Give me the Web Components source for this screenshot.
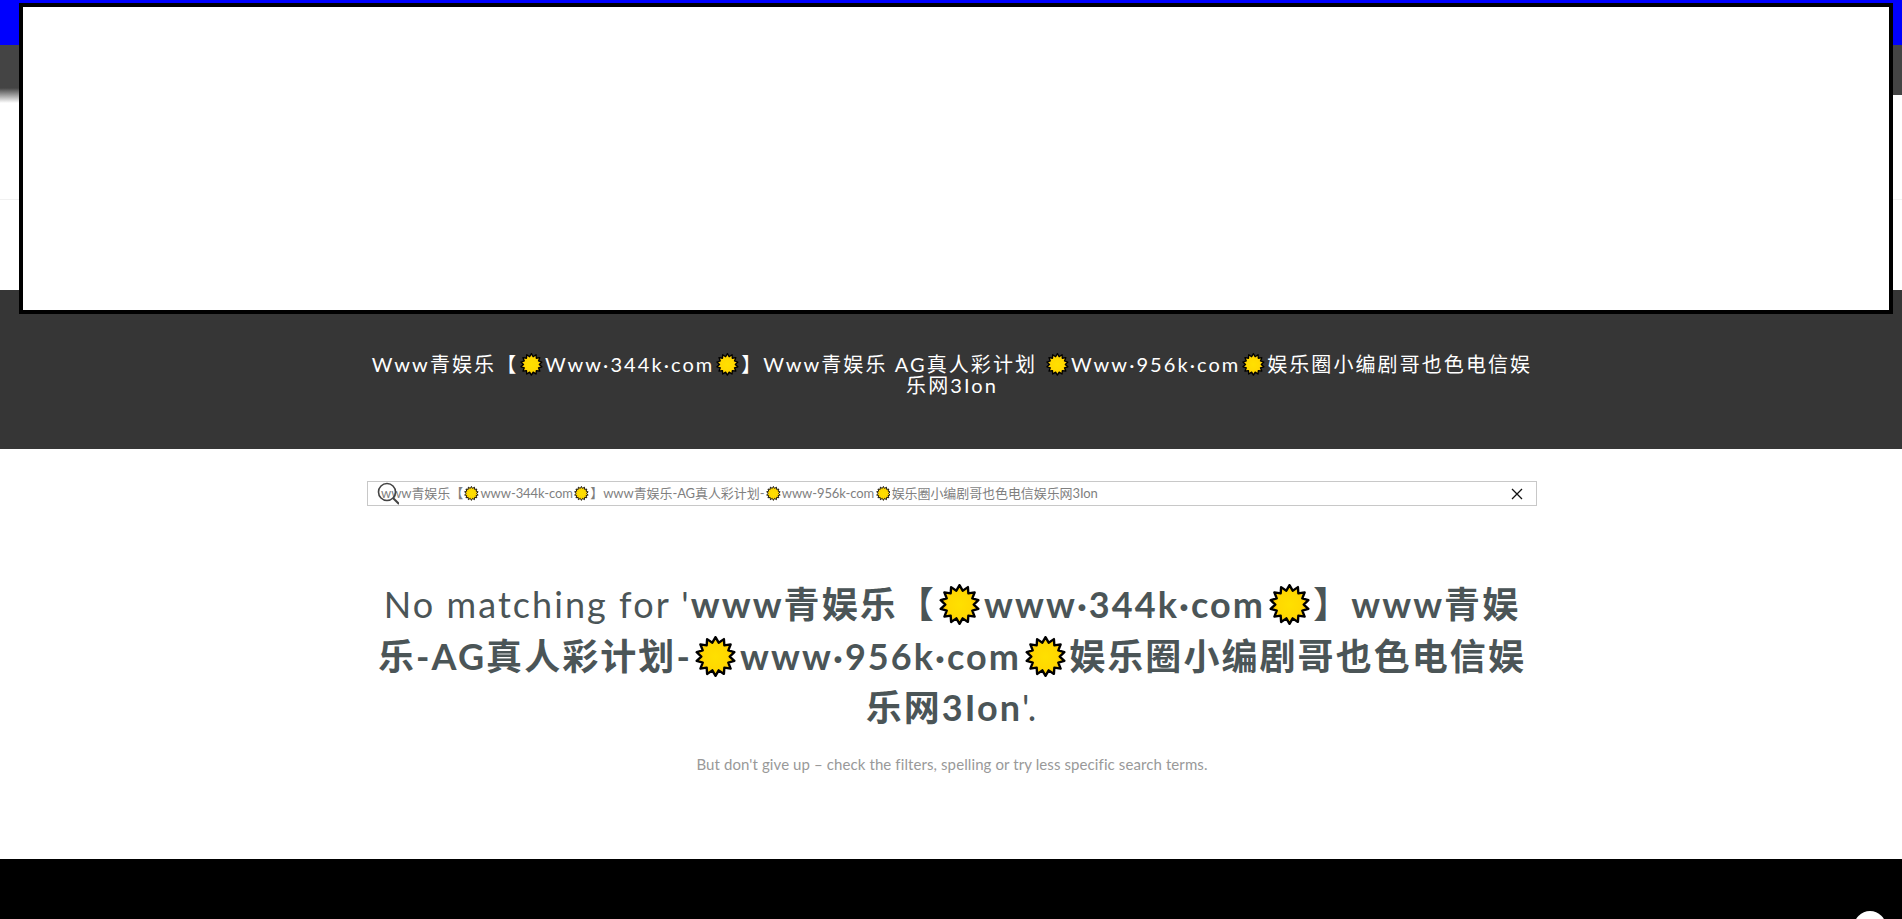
<!DOCTYPE html>
<html><head><meta charset="utf-8"><style>
html,body{margin:0;height:919px;overflow:hidden;background:#fff}
body{font-family:Lato,"Noto Sans CJK SC",sans-serif}
</style></head><body>
<app-page></app-page>
<script>
const FONT='Lato,"Noto Sans CJK SC",sans-serif';
class SunIcon extends HTMLElement{
  constructor(){super();const r=this.attachShadow({mode:'open'});
    const n=14,R=49,I=36;let p=[];
    for(let i=0;i<n*2;i++){const a=Math.PI*i/n-Math.PI/2,q=i%2?I:R;p.push((52+q*Math.cos(a)).toFixed(1)+','+(52+q*Math.sin(a)).toFixed(1));}
    r.innerHTML=`<style>:host{display:inline-block;width:1.14em;height:1.14em;vertical-align:0;margin:-.2em .1em}svg{display:block;width:100%;height:100%}</style>
    <svg viewBox="0 0 104 104"><defs><radialGradient id="g"><stop offset="0" stop-color="#ffe000"/><stop offset=".65" stop-color="#ffd800"/><stop offset="1" stop-color="#fbbf10"/></radialGradient></defs><polygon points="${p.join(' ')}" fill="url(#g)" stroke="#000" stroke-width="6" stroke-linejoin="round"/></svg>`;}
}
customElements.define('sun-icon',SunIcon);

class TopNav extends HTMLElement{
  constructor(){super();this.attachShadow({mode:'open'}).innerHTML=`<style>
  :host{display:block;position:relative;height:290px;background:#fff;overflow:hidden}
  .blue{height:45px;background:#0000fe}
  .dark{height:50px;background:#444}
  .fade{position:absolute;left:0;top:88px;width:19px;height:15px;background:linear-gradient(#444,#fff)}
  .rule{margin-top:104px;height:1px;background:#f1f1f1}
  </style><div class="blue"></div><div class="dark"></div><div class="fade"></div><div class="rule"></div>`;}
}
customElements.define('top-nav',TopNav);

class HeroBand extends HTMLElement{
  constructor(){super();this.attachShadow({mode:'open'}).innerHTML=`<style>
  :host{display:flex;height:159px;box-sizing:border-box;padding:64px 0 0 2px;justify-content:center;background:#363636;color:#fff}
  h1{margin:0;width:1170px;text-align:center;font:400 20px/20.5px ${FONT};letter-spacing:2.08px}
  </style><h1><slot></slot></h1>`;}
}
customElements.define('hero-band',HeroBand);

class SearchBox extends HTMLElement{
  constructor(){super();this.attachShadow({mode:'open'}).innerHTML=`<style>
  :host{display:flex;position:relative;box-sizing:border-box;width:1170px;height:25px;border:1px solid #c8c8c8;align-items:center;padding-left:13px;color:#7f7f7f;font:13px/23px ${FONT};letter-spacing:-.08px;white-space:nowrap}
  .s{position:absolute;left:9px;top:0;width:22px;height:24px}
  .x{position:absolute;right:12px;top:5px;width:14px;height:14px}
  </style><span><slot></slot></span>
  <svg class="s" viewBox="0 0 22 24" fill="none" stroke="#444"><circle cx="10" cy="10" r="8.5" stroke-width="1.6"/><path d="M16 16l6 6" stroke-width="2"/></svg>
  <svg class="x" viewBox="0 0 14 14" fill="none" stroke="#111" stroke-width="1.3"><path d="M2 2l10 10M12 2L2 12"/></svg>`;}
}
customElements.define('search-box',SearchBox);

class NoResult extends HTMLElement{
  constructor(){super();this.attachShadow({mode:'open'}).innerHTML=`<style>
  :host{display:block;width:1170px;margin-top:73px;text-align:center}
  h2{margin:0;font:400 36px/51.6px ${FONT};letter-spacing:2.06px;color:#4b5557}
  p{margin:19px 0 0;font:400 15px/22px ${FONT};letter-spacing:.1px;color:#999}
  </style><h2><slot name="title"></slot></h2><p><slot name="sub"></slot></p>`;}
}
customElements.define('no-result',NoResult);

class ContentArea extends HTMLElement{
  constructor(){super();this.attachShadow({mode:'open'}).innerHTML=`<style>
  :host{display:flex;flex-direction:column;align-items:center;height:410px;box-sizing:border-box;padding:32px 0 0 2px;background:#fff}
  </style><slot></slot>`;}
}
customElements.define('content-area',ContentArea);

class SiteFooter extends HTMLElement{
  constructor(){super();this.attachShadow({mode:'open'}).innerHTML=`<style>
  :host{display:block;height:60px;background:#000}
  </style>`;}
}
customElements.define('site-footer',SiteFooter);

class AppPage extends HTMLElement{
  constructor(){super();const s=this.attachShadow({mode:'open'});
  const sun='<sun-icon></sun-icon>';
  s.innerHTML=`<style>
  :host{display:block;position:relative;height:919px;overflow:hidden;font-family:${FONT}}
  .modal{position:absolute;left:19px;top:3px;width:1874px;height:311px;box-sizing:border-box;border:4px solid #000;background:#fff}
  .top{position:absolute;left:1854px;top:911px;width:32px;height:32px;border-radius:50%;background:#fff}
  b{font-weight:700}
  </style>
  <top-nav></top-nav>
  <hero-band>Www青娱乐【${sun}Www·344k·com${sun}】Www青娱乐 AG真人彩计划 ${sun}Www·956k·com${sun}娱乐圈小编剧哥也色电信娱乐网3Ion</hero-band>
  <content-area>
    <search-box>www青娱乐【${sun}www-344k-com${sun}】www青娱乐-AG真人彩计划-${sun}www-956k-com${sun}娱乐圈小编剧哥也色电信娱乐网3Ion</search-box>
    <no-result>
      <span slot="title">No matching for '<b>www青娱乐【${sun}www·344k·com${sun}】www青娱乐-AG真人彩计划-${sun}www·956k·com${sun}娱乐圈小编剧哥也色电信娱乐网3Ion</b>'.</span>
      <span slot="sub">But don't give up – check the filters, spelling or try less specific search terms.</span>
    </no-result>
  </content-area>
  <site-footer></site-footer>
  <div class="modal"></div>
  <div class="top"></div>`;}
}
customElements.define('app-page',AppPage);
</script>
</body></html>
